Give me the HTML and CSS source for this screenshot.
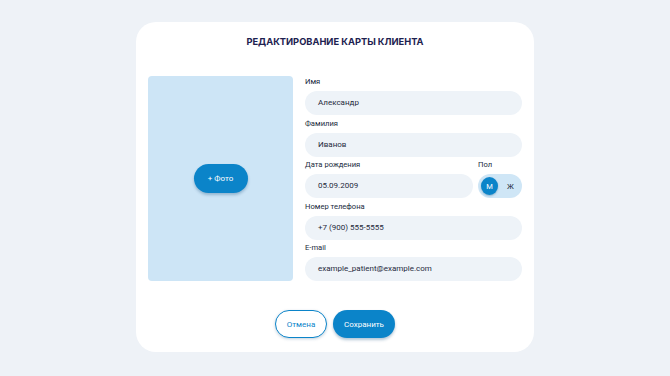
FILE: index.html
```html
<!DOCTYPE html>
<html lang="ru">
<head>
<meta charset="utf-8">
<title>Редактирование карты клиента</title>
<link rel="stylesheet" href="styles.css">
</head>
<body>
<div class="page">
  <div class="card">
    <h1 class="title">РЕДАКТИРОВАНИЕ КАРТЫ КЛИЕНТА</h1>
    <div class="content">
      <div class="photo">
        <button class="btn btn-primary btn-photo">+ Фото</button>
      </div>
      <div class="fields">
        <div class="field">
          <div class="label">Имя</div>
          <div class="input">Александр</div>
        </div>
        <div class="field">
          <div class="label">Фамилия</div>
          <div class="input">Иванов</div>
        </div>
        <div class="row">
          <div class="field grow">
            <div class="label">Дата рождения</div>
            <div class="input">05.09.2009</div>
          </div>
          <div class="field">
            <div class="label">Пол</div>
            <div class="toggle">
              <span class="opt active">М</span>
              <span class="opt">Ж</span>
            </div>
          </div>
        </div>
        <div class="field">
          <div class="label">Номер телефона</div>
          <div class="input">+7 (900) 555-5555</div>
        </div>
        <div class="field">
          <div class="label">E-mail</div>
          <div class="input">example_patient@example.com</div>
        </div>
      </div>
    </div>
    <div class="actions">
      <button class="btn btn-outline">Отмена</button>
      <button class="btn btn-primary btn-save">Сохранить</button>
    </div>
  </div>
</div>
</body>
</html>
```

FILE: styles.css
```css
* { box-sizing: border-box; }
html, body { margin: 0; padding: 0; }
body {
  width: 670px;
  height: 376px;
  background: #eef2f7;
  font-family: Roboto, "Liberation Sans", sans-serif;
  color: #1f2a3c;
  overflow: hidden;
}
.page {
  padding-top: 22px;
  display: flex;
  justify-content: center;
}
.card {
  width: 398px;
  height: 330px;
  background: #fff;
  border-radius: 20px;
  padding: 13px 12px 14px;
  display: flex;
  flex-direction: column;
}
.title {
  margin: 0;
  font-family: Inter, Roboto, sans-serif;
  font-size: 9.3px;
  line-height: 14px;
  font-weight: 700;
  text-align: center;
  color: #1d2250;
}
.content {
  margin-top: 27px;
  display: flex;
  gap: 12px;
}
.photo {
  width: 145px;
  flex: none;
  background: #cde5f6;
  border-radius: 4px;
  display: flex;
  align-items: center;
  justify-content: center;
}
.fields {
  flex: 1;
  display: flex;
  flex-direction: column;
  gap: 2.5px;
}
.row {
  display: flex;
  gap: 5px;
}
.grow { flex: 1; }
.label {
  font-size: 7.6px;
  line-height: 12px;
  margin-bottom: 3px;
  color: #202a3d;
}
.input {
  height: 24px;
  border-radius: 12px;
  background: #eef3f8;
  padding-left: 13px;
  font-size: 8px;
  line-height: 24px;
  color: #1f2a3c;
}
.toggle {
  width: 44px;
  height: 24px;
  border-radius: 12px;
  background: #cfe6f6;
  display: flex;
  align-items: center;
  padding: 0 3px;
  gap: 4px;
}
.opt {
  width: 18px;
  height: 18px;
  border-radius: 50%;
  display: flex;
  align-items: center;
  justify-content: center;
  font-size: 7.5px;
  color: #1f2a3c;
}
.opt.active {
  background: #0b84c9;
  color: #fff;
  box-shadow: 0 1px 2px rgba(11, 80, 130, 0.35);
}
.btn {
  border: none;
  font-family: Roboto, "Liberation Sans", sans-serif;
  font-size: 8px;
  border-radius: 15px;
  cursor: pointer;
  padding: 0;
}
.btn-primary {
  background: #0b84c9;
  color: #fff;
  box-shadow: 0 2px 3px rgba(10, 70, 120, 0.3);
}
.btn-photo {
  width: 54px;
  height: 29px;
}
.actions {
  margin-top: auto;
  display: flex;
  justify-content: center;
  gap: 6px;
}
.btn-outline {
  width: 52px;
  height: 28px;
  background: #fff;
  color: #0b84c9;
  border: 1px solid #0b84c9;
  box-shadow: 0 1px 3px rgba(10, 70, 120, 0.25);
}
.btn-save {
  width: 62px;
  height: 28px;
}
```
